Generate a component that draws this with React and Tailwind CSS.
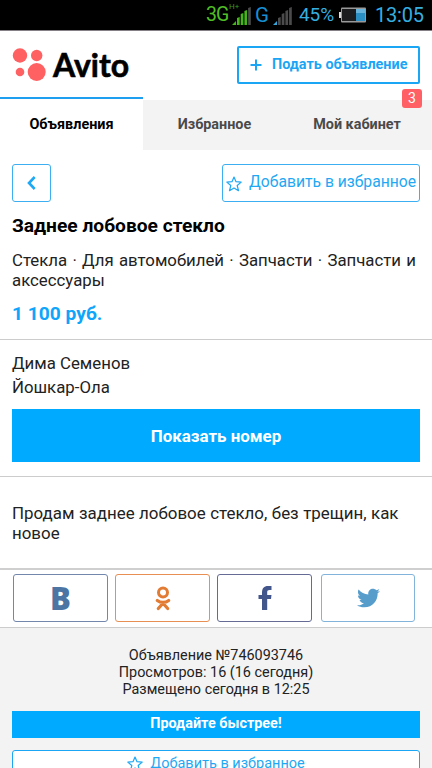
import React from "react";
import { FaTwitter } from "react-icons/fa";

const shares = [
  {
    key: "vk",
    box: "w-[95px] border-[#7287ab]",
    icon: (
      <span className="font-['Open_Sans',sans-serif] text-[31px] leading-none font-extrabold text-[#4d75a3]">
        B
      </span>
    ),
  },
  {
    key: "ok",
    box: "ml-[7px] w-[95px] border-[#e89054]",
    icon: (
      <svg className="h-[25px] w-4" viewBox="0 0 16 25" fill="none" stroke="#e27c35" strokeLinecap="round">
        <circle cx="8" cy="6.500" r="4.500" strokeWidth="3" />
        <path d="M2.300 14.500C5.500 17 10.500 17 13.700 14.500M8 17.200l-4.700 5.300M8 17.200l4.700 5.300" strokeWidth="3.200" />
      </svg>
    ),
  },
  {
    key: "fb",
    box: "ml-[7px] w-[95px] border-[#656b94]",
    icon: (
      <svg className="h-[24px] w-[14px]" viewBox="0 0 14 24" fill="#43568b">
        <path d="M4 24V13H.5V9H4V6.500C4 2.200 6 0 10 0h3.500v4.100H11.500C9.800 4.100 9.200 4.900 9.200 6.300V9h4.300l-.5 4H9.200v11z" />
      </svg>
    ),
  },
  {
    key: "tw",
    box: "ml-[9px] w-[94px] border-[#82b4db]",
    icon: <FaTwitter className="h-[24px] w-[23px] text-[#579dcc]" />,
  },
];

function Star() {
  return (
    <svg className="mt-px h-4 w-4 shrink-0" viewBox="0 0 16 16" fill="none" stroke="currentColor" strokeWidth="1.2">
      <path d="M8 1l2 4.700 5.200.4-4 3.400 1.300 5.200L8 12l-4.500 2.700 1.300-5.200-4-3.400L6 5.700z" strokeLinejoin="round" />
    </svg>
  );
}

function Signal({ active, color }) {
  return (
    <svg className="h-[18px] w-[19px]" viewBox="0 0 19 18">
      <path d="M0 18l4-4v4z" fill={color} />
      {[8, 12, 15, 18].map((h, i) => (
        <path
          key={h}
          d={`M${5 + i * 3.7} 18v${1 - h}l2.700-1v${h}z`}
          fill={i < active ? color : "#4b4b4b"}
        />
      ))}
    </svg>
  );
}

function StatusBar() {
  return (
    <div className="flex h-[31px] items-center border-b border-[#858085] bg-black pl-[206px] text-[#35afe0]">
      <span className="w-[23px] text-[19.5px] tracking-[-0.9px] text-[#4fbd25]">3G</span>
      <span className="-mt-[16px] w-[11px] text-[8px] leading-none text-[#3a9420]">H+</span>
      <span className="ml-[-8px] pt-px">
        <Signal active={3} color="#46b51c" />
      </span>
      <span className="ml-[4px] w-[15px] text-[20.5px] text-[#168fd1]">G</span>
      <span className="ml-[3px] pt-px">
        <Signal active={0} color="#35a7dc" />
      </span>
      <span className="ml-[7px] w-[39px] text-[19px] tracking-[-0.1px]">45%</span>
      <svg className="ml-[1px] h-4 w-[28px]" viewBox="0 0 28 16">
        <path d="M0 5h2v6H0z" fill="#ddd" />
        <rect x="2" y=".5" width="25" height="15" rx="1" fill="#999" />
        <path d="M3 2h14v12H3z" fill="#1b1d1f" />
        <path d="M17 2h9v12h-9z" fill="#2b8fc4" />
        <path d="M17 2h9v4h-9z" fill="#69b4dc" />
      </svg>
      <span className="ml-[8px] text-[20px] tracking-[-0.2px]">13:05</span>
    </div>
  );
}

function Header() {
  return (
    <div className="flex h-[66px] items-start justify-between pr-3 pl-[12px]">
      <div className="flex pt-[16px]">
        <svg className="h-[36px] w-[34px]" viewBox="0 0 34 36" fill="#ff6163">
          <circle cx="8" cy="8.5" r="7.2" />
          <circle cx="24.7" cy="8.5" r="5.7" />
          <circle cx="8" cy="25" r="4.3" />
          <circle cx="24.7" cy="25" r="9" />
        </svg>
        <span className="ml-[7px] font-['Lato',sans-serif] text-[32px] leading-[36px] font-bold text-black [-webkit-text-stroke:0.6px_black]">
          Avito
        </span>
      </div>
      <button className="mt-[15px] flex h-[38px] w-[183px] items-center rounded-[2px] border-2 border-[#1aa6f5] pl-[11px] text-[14.4px] font-bold text-[#1aa6f5]">
        <svg className="mr-[10px] h-3 w-3" viewBox="0 0 12 12" stroke="currentColor" strokeWidth="2">
          <path d="M6 .5v11M.5 6h11" />
        </svg>
        <span className="whitespace-nowrap">Подать объявление</span>
      </button>
    </div>
  );
}

function Tabs() {
  return (
    <div className="flex h-[53px] text-center text-[14.4px] font-bold">
      <div className="w-[143px] border-t-2 border-[#1e9ff0] pt-[15px] text-black">Объявления</div>
      <div className="mt-[3px] w-[143px] bg-[#f3f3f3] pt-[14px] text-[#4a4a4a]">Избранное</div>
      <div className="relative mt-[3px] flex-1 bg-[#f3f3f3] pt-[14px] pr-[4px] text-[#4a4a4a]">
        Мой кабинет
        <span className="absolute -top-[11px] right-[10px] h-[19px] w-5 rounded-[3px] bg-[#ff6066] text-[14px] leading-[19px] font-normal text-white">
          3
        </span>
      </div>
    </div>
  );
}

export default function App() {
  return (
    <div className="h-[768px] w-[432px] overflow-hidden bg-white font-['Roboto',sans-serif] text-[#222]">
      <StatusBar />
      <Header />
      <Tabs />

      <div className="h-[189px] px-3 pt-[14px]">
        <div className="flex justify-between text-[#1fa8f3]">
          <button className="flex h-[38px] w-[39px] items-center justify-center rounded-[3px] border border-[#3baff2]">
            <svg className="h-[14px] w-[9px]" viewBox="0 0 9 14" fill="none" stroke="currentColor" strokeWidth="2.6">
              <path d="M7.700 1 2 7l5.700 6" />
            </svg>
          </button>
          <button className="flex h-[38px] w-[198px] items-center rounded-[3px] border border-[#3baff2] pl-[3px] text-[15.7px]">
            <Star />
            <span className="ml-[7px] pb-[2px] whitespace-nowrap">Добавить в избранное</span>
          </button>
        </div>
        <h1 className="mt-[12px] text-[19.2px] leading-6 font-bold text-black">Заднее лобовое стекло</h1>
        <p className="mt-[12px] text-[16.8px] leading-[20px] whitespace-nowrap [word-spacing:1.1px]">
          Стекла · Для автомобилей · Запчасти · Запчасти и
          <br />
          аксессуары
        </p>
        <p className="mt-[12px] text-[19.2px] leading-6 font-bold text-[#0fa5fb]">1 100 руб.</p>
      </div>

      <div className="h-[137px] border-t border-[#ccc] px-3 pt-[11px]">
        <p className="text-[16.8px] leading-6">
          Дима Семенов
          <br />
          Йошкар-Ола
        </p>
        <button className="mt-[10px] h-[53px] w-full bg-[#00aaff] pt-[3px] text-[16.9px] font-bold text-white">
          Показать номер
        </button>
      </div>

      <p className="h-[92px] border-t border-[#ccc] px-3 pt-[26px] text-[16.9px] leading-[20px] [word-spacing:0.3px]">
        Продам заднее лобовое стекло, без трещин, как
        <br />
        новое
      </p>

      <div className="flex h-[59px] border-t-2 border-[#cfcfcf] pt-[4px] pl-[13px]">
        {shares.map((s) => (
          <div key={s.key} className={`flex h-[48px] items-center justify-center rounded-[3px] border ${s.box}`}>
            {s.icon}
          </div>
        ))}
      </div>

      <div className="h-[141px] overflow-hidden border-t border-[#ccc] bg-[#f3f3f3] px-3 pt-[19px] text-center text-[14.4px] leading-[17px]">
        <p>Объявление №746093746</p>
        <p>Просмотров: 16 (16 сегодня)</p>
        <p>Размещено сегодня в 12:25</p>
        <div className="mt-[13px] h-[27px] bg-[#00aaff] text-[14.4px] leading-[26px] font-bold text-white">
          Продайте быстрее!
        </div>
        <button className="mt-[12px] flex h-[38px] w-full items-start justify-center rounded-[3px] border border-[#1aa6f5] bg-white pt-[4px] text-[14.5px] text-[#1fa8f3]">
          <Star />
          <span className="ml-[7px]">Добавить в избранное</span>
        </button>
      </div>
    </div>
  );
}
